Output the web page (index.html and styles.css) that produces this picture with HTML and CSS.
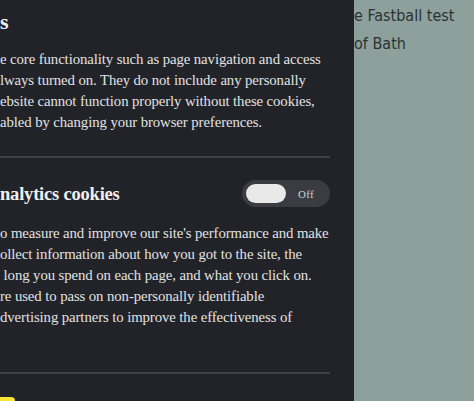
FILE: index.html
```html
<!DOCTYPE html>
<html lang="en">
<head>
<meta charset="utf-8">
<title>Cookie preferences</title>
<link rel="stylesheet" href="styles.css">
</head>
<body>
<div class="page">
  <aside class="panel">
    <div class="panel-inner">
      <h2 class="panel-title">s</h2>
      <p class="panel-text">e core functionality such as page navigation and access<br>lways turned on. They do not include any personally<br>ebsite cannot function properly without these cookies,<br>abled by changing your browser preferences.</p>
      <hr class="rule">
      <div class="category">
        <h3 class="category-title">nalytics cookies</h3>
        <button class="toggle" type="button" aria-pressed="false">
          <span class="toggle-knob"></span>
          <span class="toggle-label">Off</span>
        </button>
      </div>
      <p class="panel-text panel-text-long">o measure and improve our site's performance and make<br>ollect information about how you got to the site, the<br>&nbsp;long you spend on each page, and what you click on.<br>re used to pass on non-personally identifiable<br>dvertising partners to improve the effectiveness of<br>&nbsp;</p>
      <hr class="rule">
      <div class="actions">
        <button class="accept-btn" type="button"></button>
      </div>
    </div>
  </aside>
  <main class="main">
    <p class="main-line">e Fastball test</p>
    <p class="main-line">of Bath</p>
  </main>
</div>
</body>
</html>
```

FILE: styles.css
```css
html, body {
  margin: 0;
  padding: 0;
  height: 100%;
}

body {
  background: #8ea09c;
  overflow: hidden;
}

.page {
  display: flex;
  height: 401px;
}

.panel {
  width: 354px;
  flex: 0 0 354px;
  background: #212329;
  color: #e4e4e4;
  font-family: "Liberation Serif", "Times New Roman", serif;
  overflow: hidden;
}

.panel-inner {
  padding: 8px 24px 0 0;
  display: flex;
  flex-direction: column;
}

.panel-title {
  margin: 0;
  font-size: 22px;
  line-height: 28px;
  font-weight: 700;
  color: #f0f0f0;
}

.panel-text {
  margin: 13px 0 0;
  font-size: 14.8px;
  letter-spacing: -0.1px;
  line-height: 21px;
  color: #e2e2e2;
  white-space: nowrap;
}

.panel-text-long {
  margin-top: 16px;
}

.rule {
  border: 0;
  height: 2px;
  background: #404247;
  margin: 23px 0 0;
}

.category {
  margin-top: 22px;
  display: flex;
  align-items: center;
  justify-content: space-between;
}

.category-title {
  margin: 0;
  font-size: 18.5px;
  letter-spacing: -0.2px;
  line-height: 24px;
  font-weight: 700;
  color: #f0f0f0;
}

.toggle {
  width: 88px;
  height: 27px;
  border: 0;
  border-radius: 14px;
  background: #3a3c42;
  padding: 0 4px;
  display: flex;
  align-items: center;
  gap: 12px;
  cursor: pointer;
  font-family: inherit;
}

.toggle-knob {
  width: 40px;
  height: 19px;
  border-radius: 10px;
  background: #e9e9e9;
}

.toggle-label {
  font-size: 11px;
  color: #cfcfcf;
  letter-spacing: 0.3px;
}

.actions {
  margin-top: 23px;
  display: flex;
}

.accept-btn {
  width: 15px;
  height: 20px;
  border: 0;
  border-radius: 0 4px 0 0;
  background: #fbe533;
  padding: 0;
}

.main {
  flex: 1;
  padding-top: 2px;
  font-family: "DejaVu Sans Condensed", "DejaVu Sans", sans-serif;
  font-stretch: condensed;
  font-size: 16px;
  line-height: 28px;
  color: #2a3333;
}

.main-line {
  margin: 0;
}
```
